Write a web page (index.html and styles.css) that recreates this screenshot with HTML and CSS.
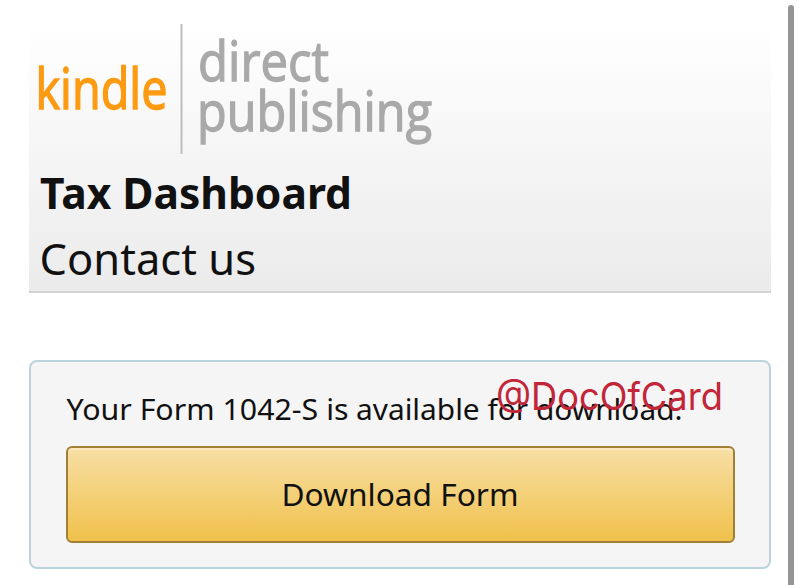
FILE: index.html
```
<!DOCTYPE html>
<html lang="en">
<head>
<meta charset="utf-8">
<title>Tax Dashboard</title>
<link rel="stylesheet" href="styles.css">
</head>
<body>
<header class="header">
  <svg class="logo" width="410" height="134" viewBox="0 0 410 134" role="img" aria-label="kindle direct publishing">
    <text class="brand" x="6.500" y="87" textLength="132" lengthAdjust="spacingAndGlyphs">kindle</text>
    <rect class="rule" x="151.500" y="2" width="2" height="130"/>
    <text class="sub" x="169" y="58.500" textLength="131" lengthAdjust="spacingAndGlyphs">direct</text>
    <text class="sub" x="168" y="108.500" textLength="235" lengthAdjust="spacingAndGlyphs">publishing</text>
  </svg>
  <svg class="line" width="700" height="66"><text class="title" x="11" y="55.500" textLength="312" lengthAdjust="spacingAndGlyphs">Tax Dashboard</text></svg>
  <svg class="line" width="700" height="66"><text class="contact" x="10.500" y="55.500" textLength="216.500" lengthAdjust="spacingAndGlyphs">Contact us</text></svg>
</header>
<main class="card">
  <svg class="line" width="667" height="49"><text class="message" y="22.500"><tspan x="0.500" textLength="282" lengthAdjust="spacingAndGlyphs">Your Form 1042-S is</tspan> <tspan x="290" textLength="326.500" lengthAdjust="spacingAndGlyphs">available for download.</tspan></text></svg>
  <button class="download"><svg class="line" width="240" height="50"><text class="label" x="1.500" y="36" textLength="237" lengthAdjust="spacingAndGlyphs">Download Form</text></svg></button>
  <svg class="handle" width="230" height="50"><text x="0" y="36" textLength="227" lengthAdjust="spacingAndGlyphs">@DocOfCard</text></svg>
</main>
<div class="scrollbar"></div>
</body>
</html>
```
FILE: styles.css
```
* { box-sizing: border-box; }
body { margin: 0; height: 585px; overflow: hidden; background: #fff; color: #111; font-family: "Noto Sans", sans-serif; }
svg { display: block; overflow: visible; }
.header { width: 742px; height: 271px; margin: 22px 0 0 29px; background: linear-gradient(#fff, #ebebeb); border-bottom: 2px solid #d3d3d3; }
.logo { height: 134px; margin-bottom: -3px; }
.brand { font: 56px "Open Sans", sans-serif; fill: #fc9a12; stroke: #fc9a12; stroke-width: 1.4; }
.sub { font: 54px "Open Sans", sans-serif; fill: #a9a9a9; stroke: #a9a9a9; stroke-width: 1.3; }
.rule { fill: #bebebe; }
.title { font-size: 43.5px; font-weight: 700; fill: #111; }
.contact { font-size: 43px; fill: #111; }
.card { position: relative; width: 742px; height: 209px; margin: 67px 0 0 29px; padding: 35px 36px 0 35px; border: 2px solid #bad3dc; border-radius: 8px; background: #f5f5f6; }
.message { font-size: 29px; fill: #111; }
.download { display: flex; align-items: center; justify-content: center; width: 669px; height: 97px; margin-left: -0.5px; padding: 0; border: 2px solid #a08037; border-radius: 6px; background: linear-gradient(#f7dfa5, #f0c14b); box-shadow: inset 0 2px #fbe8be; }
.label { font: 31.5px "Noto Sans", sans-serif; fill: #111; }
.handle { position: absolute; left: 465px; top: 12px; font: 38.5px Inter, sans-serif; fill: #c32638; }
.scrollbar { position: absolute; top: 5px; left: 788px; width: 6px; height: 590px; border-radius: 3px; background: #959595; }
```
